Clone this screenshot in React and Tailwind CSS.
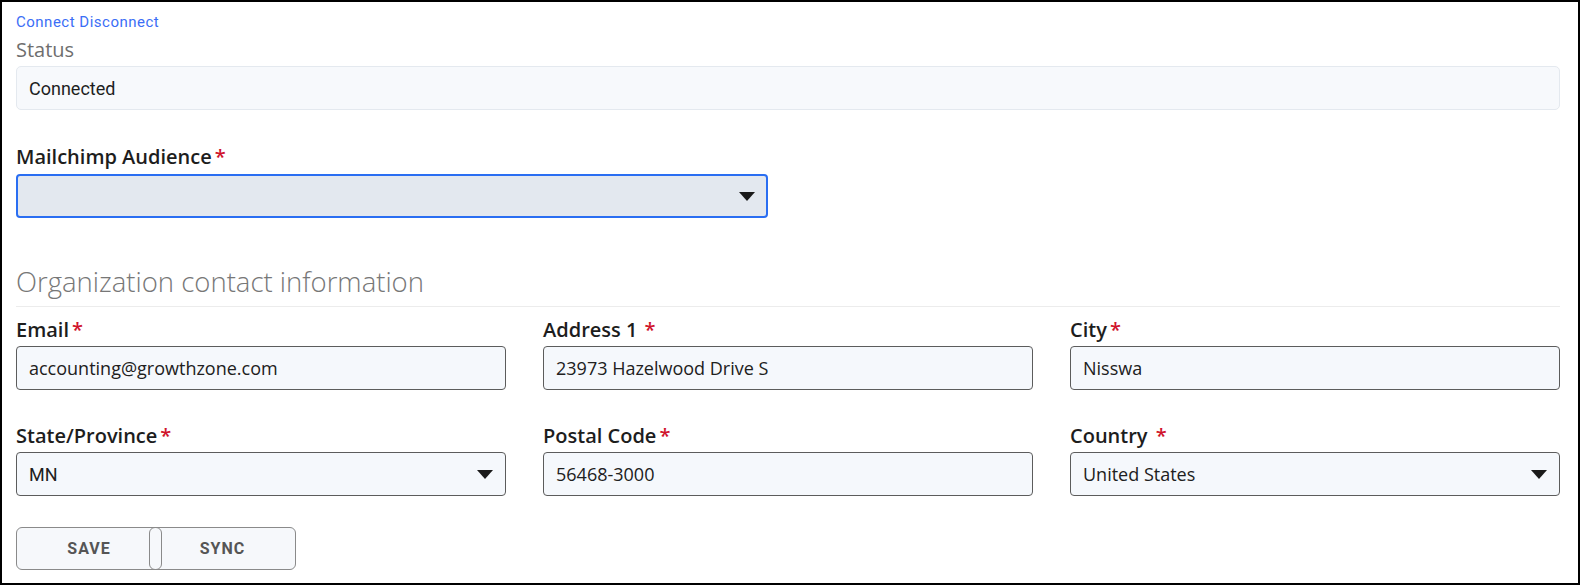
const Caret = () => (
  <svg width="16" height="9" viewBox="0 0 16 9" className="shrink-0">
    <path d="M0 0 L16 0 L8 9 Z" fill="#1a1a1a" />
  </svg>
);

const Label = ({ text, spaced, gap = "ml-[3px]", className = "" }) => (
  <div
    className={`h-6 leading-6 text-[20px] font-semibold text-[#1d1d1d] font-['Open_Sans',sans-serif] ${className}`}
  >
    {text}
    {spaced ? " " : ""}
    <span className={`text-[#d0142c] ${gap}`}>*</span>
  </div>
);

const Field = ({ label, value, select, spaced, gap, mono }) => (
  <div className="flex flex-col">
    <Label text={label} spaced={spaced} gap={gap} />
    <div className="mt-1 h-[44px] rounded-[4px] border border-[#5c5c5c] bg-[#f5f8fc] flex items-center justify-between pl-3 pr-3">
      <span
        className={`text-[18px] text-[#202020] ${
          mono ? "font-['Roboto',sans-serif]" : "font-['Open_Sans',sans-serif]"
        }`}
      >
        {value}
      </span>
      {select && <Caret />}
    </div>
  </div>
);

export default function App() {
  return (
    <div className="w-[1580px] h-[585px] box-border border-2 border-black bg-white pl-[14px] pr-[16px] overflow-hidden">
      <div className="w-[1544px]">
        <div className="pt-[12px] h-[28px] leading-4 text-[15px] tracking-[0.5px] text-[#3b6ef6] font-['Roboto',sans-serif]">
          <span>Connect</span> <span>Disconnect</span>
        </div>
        <div className="mt-2 h-6 leading-6 text-[20px] text-[#6e6e6e] font-['Open_Sans',sans-serif]">
          Status
        </div>
        <div className="mt-1 h-[44px] rounded-[5px] border border-[#e4e9ef] bg-[#f7f9fc] flex items-center pl-[12px] text-[18px] text-[#1e1e1e] font-['Roboto',sans-serif]">
          Connected
        </div>

        <Label text="Mailchimp Audience" className="mt-[35px]" />
        <div className="mt-[5px] w-[752px] h-[44px] rounded-[4px] border-2 border-[#2a6ef2] bg-[#e3e8ef] flex items-center justify-end pr-[11px]">
          <Caret />
        </div>

        <div className="mt-[48px] h-8 leading-8 text-[27.5px] font-light text-[#777777] font-['Open_Sans',sans-serif]">
          Organization contact information
        </div>
        <div className="mt-2 h-px bg-[#ececec]" />

        <div className="mt-[11px] grid grid-cols-3 gap-x-[37px] gap-y-[34px]">
          <Field label="Email" value="accounting@growthzone.com" />
          <Field label="Address 1" value="23973 Hazelwood Drive S" gap="ml-[7px]" />
          <Field label="City" value="Nisswa" />
          <Field label="State/Province" value="MN" select mono />
          <Field label="Postal Code" value="56468-3000" />
          <Field label="Country" value="United States" select spaced />
        </div>

        <div className="mt-[31px] flex w-fit h-[43px] rounded-[6px] bg-[#f6f8fb] font-['Roboto',sans-serif] text-[16px] font-bold text-[#555555]">
          <button className="relative z-10 w-[146px] h-full rounded-[6px] border border-[#8a8a8a] bg-transparent tracking-[0.06em]">
            SAVE
          </button>
          <button className="-ml-[13px] w-[147px] h-full rounded-[6px] border border-[#8a8a8a] bg-transparent tracking-[0.06em]">
            SYNC
          </button>
        </div>
      </div>
    </div>
  );
}
